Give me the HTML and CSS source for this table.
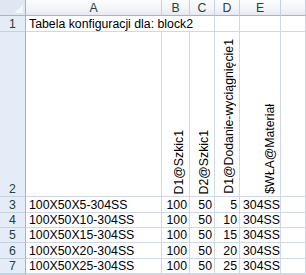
FILE: index.html
```html
<!DOCTYPE html>
<html>
<head>
<meta charset="utf-8">
<link rel="stylesheet" href="styles.css">
</head>
<body>
<div class="sheet">
  <div class="corner"></div>
  <div class="ch">A</div>
  <div class="ch">B</div>
  <div class="ch">C</div>
  <div class="ch">D</div>
  <div class="ch">E</div>
  <div class="ch"></div>

  <div class="rh">1</div>
  <div class="c span3">Tabela konfiguracji dla: block2</div>
  <div class="c"></div>
  <div class="c"></div>
  <div class="c"></div>

  <div class="rh">2</div>
  <div class="c"></div>
  <div class="c rot"><span>D1@Szkic1</span></div>
  <div class="c rot"><span>D2@Szkic1</span></div>
  <div class="c rot"><span>D1@Dodanie-wyciągnięcie1</span></div>
  <div class="c rot"><span>$WŁA@Materiał</span></div>
  <div class="c"></div>

  <div class="rh">3</div>
  <div class="c">100X50X5-304SS</div>
  <div class="c num">100</div>
  <div class="c num">50</div>
  <div class="c num">5</div>
  <div class="c">304SS</div>
  <div class="c"></div>

  <div class="rh">4</div>
  <div class="c">100X50X10-304SS</div>
  <div class="c num">100</div>
  <div class="c num">50</div>
  <div class="c num">10</div>
  <div class="c">304SS</div>
  <div class="c"></div>

  <div class="rh">5</div>
  <div class="c">100X50X15-304SS</div>
  <div class="c num">100</div>
  <div class="c num">50</div>
  <div class="c num">15</div>
  <div class="c">304SS</div>
  <div class="c"></div>

  <div class="rh">6</div>
  <div class="c">100X50X20-304SS</div>
  <div class="c num">100</div>
  <div class="c num">50</div>
  <div class="c num">20</div>
  <div class="c">304SS</div>
  <div class="c"></div>

  <div class="rh">7</div>
  <div class="c">100X50X25-304SS</div>
  <div class="c num">100</div>
  <div class="c num">50</div>
  <div class="c num">25</div>
  <div class="c">304SS</div>
  <div class="c"></div>

  <div class="rh"></div>
  <div class="c"></div>
  <div class="c"></div>
  <div class="c"></div>
  <div class="c"></div>
  <div class="c"></div>
  <div class="c"></div>
</div>
</body>
</html>
```
FILE: styles.css
```css
html, body {
  margin: 0;
  padding: 0;
  background: #fff;
  overflow: hidden;
}

.sheet {
  display: grid;
  grid-template-columns: 26px 136px 28px 25px 25px 41px 1fr;
  grid-template-rows: 16px 16px 165px 16px 15px 15px 16px 15px 1fr;
  width: 306px;
  height: 275px;
  font-family: "Liberation Sans", Arial, sans-serif;
  font-size: 12.3px;
  color: #000;
  overflow: hidden;
}

.corner {
  box-sizing: border-box;
  border-right: 1px solid #9eb6ce;
  border-bottom: 1px solid #9eb6ce;
  background-color: #dfe7f2;
  background-image: linear-gradient(135deg, transparent 50%, #f4f6f9 50%);
  background-size: 9px 9px;
  background-repeat: no-repeat;
  background-position: right 2px bottom 2px;
}

.ch {
  box-sizing: border-box;
  border-right: 1px solid #c5d1de;
  border-bottom: 1px solid #9eb6ce;
  background: linear-gradient(to bottom, #fbfcfd 0%, #f3f5f8 55%, #e6eaf0 100%);
  display: flex;
  align-items: center;
  justify-content: center;
  color: #27413e;
  line-height: 14px;
}

.rh {
  box-sizing: border-box;
  border-right: 1px solid #9eb6ce;
  border-bottom: 1px solid #c5d1de;
  background: #e4ecf7;
  display: flex;
  align-items: flex-end;
  justify-content: center;
  color: #27413e;
  line-height: 14px;
}

.c {
  box-sizing: border-box;
  border-right: 1px solid #d0d7e5;
  border-bottom: 1px solid #d0d7e5;
  display: flex;
  align-items: flex-end;
  padding: 0 2px 0 3px;
  line-height: 14px;
  white-space: nowrap;
  overflow: hidden;
}

.span3 {
  grid-column: span 3;
}

.num {
  justify-content: flex-end;
  padding: 0 2px 0 0;
}

.rot {
  justify-content: flex-end;
  padding: 0 3px 2px 0;
}

.rot span {
  writing-mode: vertical-rl;
  transform: rotate(180deg);
  line-height: 14px;
}
```
